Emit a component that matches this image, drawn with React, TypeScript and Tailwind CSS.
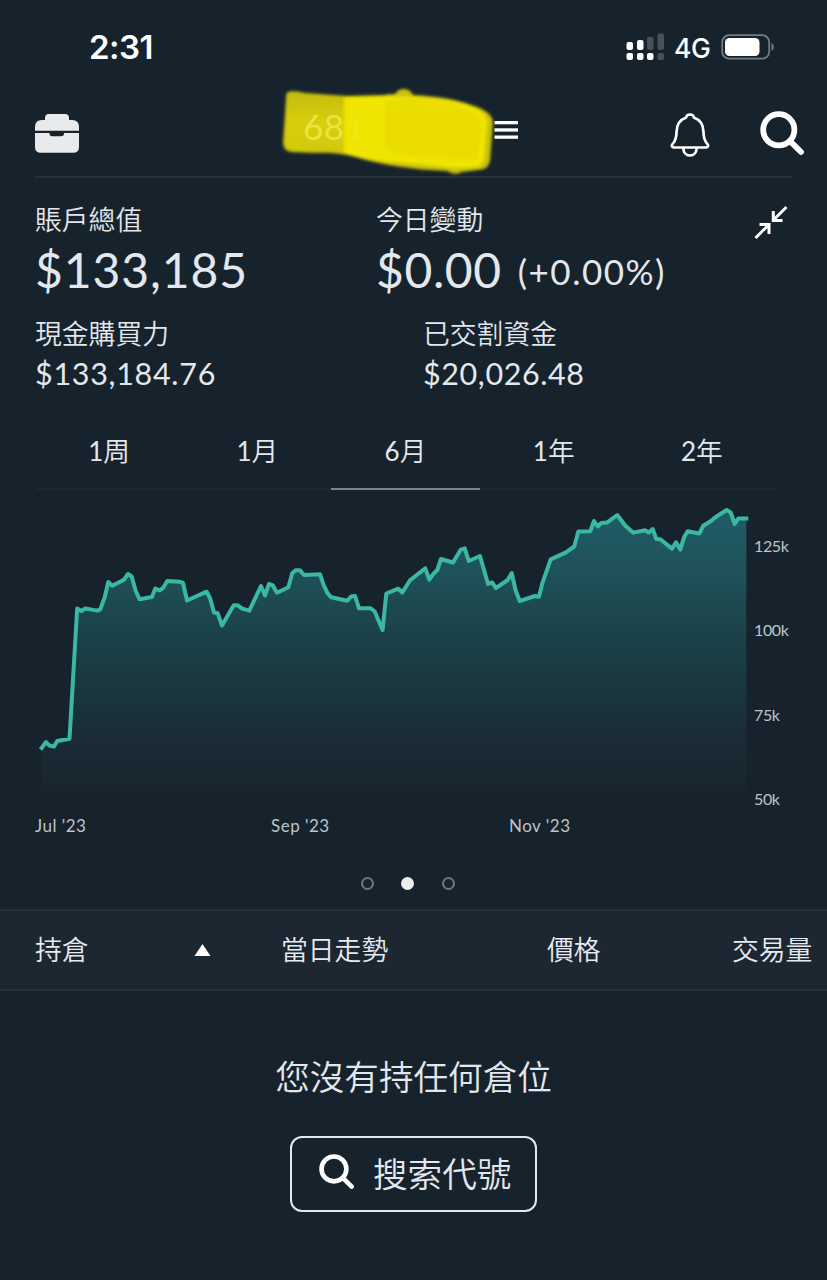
import React, { useState } from "react";

type Point = [number, number];

const tabs = [
  { count: 1, unit: "周" },
  { count: 1, unit: "月" },
  { count: 6, unit: "月" },
  { count: 1, unit: "年" },
  { count: 2, unit: "年" },
];
const priceLabels = ["125k", "100k", "75k", "50k"];

// chart points, inside a 827x320 viewBox
const points: Point[] = [
  [41.7, 258], [46, 252], [49.3, 255.5], [54, 256.5], [57.3, 251], [69.5, 248.7],
  [77.2, 118.5], [81.3, 121], [85.3, 118.5], [97.3, 120.6], [100.3, 119.3],
  [104.7, 107.3], [108.3, 92], [112.3, 95.7], [124, 89.7], [128, 84], [131.7, 86.5],
  [135.7, 101], [139.7, 109.3], [152, 107], [155.3, 98.5], [159.7, 100.3], [163, 98],
  [167.3, 91], [179.3, 91.7], [183, 93], [187, 110.5], [206.7, 101.7], [210, 108],
  [214, 122.5], [217.7, 123.3], [222, 135.5], [233.7, 115.3], [237.7, 115.3],
  [242.3, 118.7], [249.3, 120.7], [261, 96], [265, 105.5], [269, 94], [272.7, 95.3],
  [277, 102.7], [288.3, 97.3], [292.3, 83], [296, 80.2], [300, 80.3], [304, 85],
  [320, 84.2], [323.7, 95.3], [327.7, 103.3], [331.3, 107.3], [347.3, 110.8],
  [351, 106.5], [355, 105.9], [359, 118.3], [370.7, 118.3], [374.7, 121.5],
  [382.6, 140], [386.3, 103.5], [398.3, 98.7], [402.3, 102.5], [410, 90.3],
  [425.3, 78.3], [429.3, 89.7], [433.3, 84], [437.3, 80], [441, 69], [453, 72.5],
  [460.7, 59.7], [464.7, 58.4], [468.7, 71], [480, 66], [488, 94], [492, 92.4],
  [496, 98], [507.7, 90], [511.7, 83], [515.7, 100.7], [519.7, 111], [535, 106],
  [539, 106.8], [542.3, 93.3], [550.7, 69.4], [566, 62.4], [574.3, 56.3],
  [578.3, 41.4], [590.3, 41.3], [594, 31], [597.7, 36.5], [601.3, 33], [607.3, 32.4],
  [617.3, 25], [625.3, 35.7], [633, 42.6], [645, 40.3], [648.7, 42.4], [652.7, 39],
  [656.3, 49], [660.3, 49.3], [672, 58.6], [676, 52.3], [680.3, 59.6], [684, 47.3],
  [687.7, 41.2], [699.3, 43.5], [703.3, 35.7], [711, 31], [714.7, 27.7],
  [726.7, 20], [730.7, 22.5], [734.7, 34], [738.3, 28.5], [746.3, 28.5],
];

const linePath = "M" + points.map(([x, y]) => `${x} ${y}`).join("L");
const areaPath = `${linePath}L746.3 310L41.7 310Z`;

const SearchIcon = ({ className }: { className: string }) => (
  <svg className={className} viewBox="0 0 44 44" fill="none" stroke="#fff">
    <circle cx="18.8" cy="18.8" r="15.6" strokeWidth="5.8" />
    <path d="M30 30L41 41" strokeWidth="5.8" strokeLinecap="round" />
  </svg>
);

const StatusBar = () => (
  <div className="flex h-[94px] items-center justify-between pl-[89px] pr-[52px] text-white">
    <span className="font-['Inter'] text-[33px] font-semibold leading-none tracking-[-0.5px]">2:31</span>
    <div className="flex items-center">
      <svg className="h-[28px] w-[39px]" viewBox="0 0 39 28" fill="#fff">
        <rect x="0.5" y="9" width="6.5" height="8" rx="2" />
        <rect x="0.5" y="20" width="6.5" height="7" rx="2" />
        <rect x="11" y="7" width="6.5" height="10" rx="2" />
        <rect x="11" y="20" width="6.5" height="7" rx="2" />
        <rect x="21" y="4" width="6.5" height="13" rx="2" fill="#46515a" />
        <rect x="21" y="20" width="6.5" height="7" rx="2" />
        <rect x="31.5" y="0.5" width="6.5" height="16.5" rx="2" fill="#46515a" />
        <rect x="31.5" y="20" width="6.5" height="7" rx="2" fill="#46515a" />
      </svg>
      <span className="ml-[9px] w-[38px] pt-[2px] font-['Inter'] text-[26.5px] font-medium leading-none tracking-[-0.5px]">
        4G
      </span>
      <svg className="ml-[9px] h-[26px] w-[54px]" viewBox="0 0 54 26">
        <rect x="1.2" y="1.2" width="47" height="23.5" rx="7" fill="none" stroke="#717b83" strokeWidth="1.8" />
        <rect x="4" y="4" width="34.5" height="18" rx="4.5" fill="#fff" />
        <path d="M50.5 9C53.5 10.5 53.5 15.5 50.5 17Z" fill="#717b83" />
      </svg>
    </div>
  </div>
);

const Header = () => (
  <div className="relative ml-[35px] mr-[35px] flex h-[84px] border-b-2 border-[#26323d]">
    <svg className="mt-5 h-[39px] w-[44px]" viewBox="0 0 44 39" fill="#e9eaec">
      <path d="M0 16.7V13Q0 6 7 6H10V4Q10 0 14 0H30Q34 0 34 4V6H37Q44 6 44 13V16.7Z" />
      <path d="M0 19H14.5V19.5Q14.5 22.3 17.3 22.3H26.2Q29 22.3 29 19.5V19H44V33Q44 38.8 38 38.8H6Q0 38.8 0 33Z" />
    </svg>
    {/* highlighter over the account number */}
    <div className="absolute left-[240px] top-[-10px] h-[95px] w-[226px]">
      <svg className="h-full w-full" viewBox="0 0 226 95">
        <defs>
          <filter id="soft" x="-10%" y="-10%" width="120%" height="120%">
            <feGaussianBlur stdDeviation="1.4" />
          </filter>
          <linearGradient id="leftInk" x1="0" y1="0" x2="0" y2="1">
            <stop offset="0" stopColor="#c5bd11" />
            <stop offset="0.5" stopColor="#d8ce0a" />
            <stop offset="1" stopColor="#d2c90c" />
          </linearGradient>
        </defs>
        <g filter="url(#soft)">
          <path
            d="M13 8Q18 6 30 9L72 12L110 11Q112 10 120 10Q123 5 129 5Q135 5 138 11Q176 13 196 21Q217 27 218 38L215 77Q213 86 203 86L187 88Q180 92 172 87Q120 85 80 73Q60 68 40 69L16 68Q8 67 8 58L11 15Q11 9 13 8Z"
            fill="#c9c110"
          />
          <path d="M14 10Q40 10 70 14V67Q50 65 17 66Q10 65 10 58Z" fill="url(#leftInk)" />
          <path
            d="M69 13L111 12L142 13Q176 15 195 22Q212 28 212 39L209 75Q207 82 200 83L180 84Q150 80 115 78Q90 75 69 69Z"
            fill="#efe500"
          />
          <path d="M110 16L145 15Q180 17 198 29Q207 35 207 46L202 76L165 74Q135 75 110 66Z" fill="#ebdd04" />
        </g>
      </svg>
      <span className="absolute left-[28px] top-[23px] font-['Lato'] text-[35px] leading-[38px] tracking-[0.5px] text-[#ebe43c]">
        68<span className="text-[#f0e710]">1</span>
      </span>
    </div>
    <svg className="ml-[415px] mt-[27px] h-[19px] w-[24px]" viewBox="0 0 24 19" fill="#fff">
      <rect x="0.5" y="0" width="23.5" height="3.3" />
      <rect x="0.5" y="7.3" width="23.5" height="3.3" />
      <rect x="0.5" y="14.5" width="23.5" height="3.3" />
    </svg>
    <svg className="ml-[152px] mt-[18px] h-[46px] w-[40px]" viewBox="0 0 40 46" fill="none" stroke="#fff" strokeWidth="2.7">
      <path
        d="M20 2.5C17.5 2.5 16.3 4 15.8 5.8C9.5 8 6.8 13.5 6.6 19.5C6.4 26 5.5 29 2.9 31.6C1 33.7 2 35.5 4 35.5H36C38 35.5 39 33.7 37.1 31.6C34.5 29 33.6 26 33.4 19.5C33.2 13.5 30.5 8 24.2 5.8C23.7 4 22.5 2.5 20 2.5Z"
        strokeLinejoin="round"
      />
      <path d="M13.3 36C13.5 40.5 16 43.5 20 43.5S26.5 40.5 26.7 36" />
    </svg>
    <SearchIcon className="ml-[50px] mr-[-13px] mt-[17px] h-[44px] w-[44px] shrink-0" />
  </div>
);

const Summary = () => (
  <div className="pl-[35px] pr-[39px] pt-[26px] text-[#e3e7ee]">
    <div className="flex h-[100px]">
      <div className="w-[341px]">
        <div className="text-[26.8px] font-[350] leading-8">賬戶總值</div>
        <div className="text-[48px] leading-[68px] tracking-[0.9px]">$133,185</div>
      </div>
      <div className="flex-1">
        <div className="text-[26.8px] font-[350] leading-8">今日變動</div>
        <div className="flex items-baseline whitespace-nowrap leading-[68px]">
          <span className="text-[48px] tracking-[0.6px]">$0.00</span>
          <span className="relative -top-[3px] ml-[16px] text-[35px] tracking-[1.5px]">(+0.00%)</span>
        </div>
      </div>
      <svg className="mt-[1px] h-[34px] w-[34px]" viewBox="0 0 34 34" fill="none" stroke="#fff" strokeWidth="3">
        <path d="M32.5 2L19.5 15M19.3 6V15.4H28.5" />
        <path d="M1.5 33L14.5 20M5.5 19.5H15V29" />
      </svg>
    </div>
    <div className="mt-[14px] flex h-[78px]">
      <div className="w-[388px]">
        <div className="text-[26.8px] font-[350] leading-8">現金購買力</div>
        <div className="text-[30.5px] leading-[46px] tracking-[0.7px]">$133,184.76</div>
      </div>
      <div>
        <div className="text-[26.8px] font-[350] leading-8">已交割資金</div>
        <div className="text-[30.5px] leading-[46px] tracking-[0.6px]">$20,026.48</div>
      </div>
    </div>
  </div>
);

const Chart = () => (
  <div className="relative h-[358px]">
    <svg className="block h-[320px] w-full" viewBox="0 0 827 320" fill="none">
      <defs>
        <linearGradient id="area" gradientUnits="userSpaceOnUse" x1="0" y1="20" x2="0" y2="312">
          <stop offset="0" stopColor="#205d67" />
          <stop offset="0.2" stopColor="#1f525b" />
          <stop offset="0.45" stopColor="#1b4047" />
          <stop offset="0.62" stopColor="#1a363d" />
          <stop offset="0.8" stopColor="#1a2b35" />
          <stop offset="1" stopColor="#17232c" />
        </linearGradient>
      </defs>
      <path d={areaPath} fill="url(#area)" />
      <path d={linePath} stroke="#3ab8a2" strokeWidth="4" strokeLinejoin="round" strokeLinecap="square" />
    </svg>
    <div className="absolute right-0 top-[46px] flex h-[273px] w-[73px] flex-col justify-between text-[16px] leading-5 tracking-[-0.4px] text-[#bec3cb]">
      {priceLabels.map((label) => (
        <span key={label}>{label}</span>
      ))}
    </div>
    <div className="flex pl-[35px] pt-[5px] text-[17px] leading-[22px] tracking-[0.5px] text-[#bec3cb]">
      <span className="w-[236px]">Jul '23</span>
      <span className="w-[238px]">Sep '23</span>
      <span>Nov '23</span>
    </div>
  </div>
);

const Holdings = () => (
  <>
    <div className="flex h-[82px] items-center border-y-2 border-[#26313b] bg-[#1c2732] pl-[35px] text-[26.8px] font-[350] text-[#e6eaf1]">
      <span className="w-[159px]">持倉</span>
      <svg className="h-[13px] w-[17px]" viewBox="0 0 17 13" fill="#fff">
        <path d="M8.5 0L16.5 12H0.5Z" />
      </svg>
      <span className="ml-[70px] w-[266px]">當日走勢</span>
      <span className="w-[185px]">價格</span>
      <span className="whitespace-nowrap">交易量</span>
    </div>
    <div className="flex flex-col items-center pt-[64px] text-[34.6px] font-[350] text-[#e3e7ee]">
      <p className="leading-[44px]">您沒有持任何倉位</p>
      <button className="mt-[37px] flex h-[76px] w-[247px] items-center rounded-xl border-2 border-[#e3e7ee] pl-[27px] leading-none">
        <SearchIcon className="mb-[5px] h-[35px] w-[35px]" />
        <span className="ml-[19px]">搜索代號</span>
      </button>
    </div>
  </>
);

export default function App() {
  const [activeTab, setActiveTab] = useState(2);

  return (
    <div className="h-[1280px] w-[827px] overflow-hidden bg-[#17232c] font-['Lato','Noto_Sans_CJK_TC',sans-serif]">
      <StatusBar />
      <Header />
      <Summary />
      <div className="ml-[35px] mt-[20px] flex h-[74px] w-[741px] border-b-2 border-[#1c2931] text-[26.7px] font-[350] text-[#e3e7ee]">
        {tabs.map((tab, index) => (
          <button
            key={index}
            onClick={() => setActiveTab(index)}
            className={`-mb-[2px] flex-1 border-b-2 pb-[1px] ${
              index === activeTab ? "border-[#7c848c]" : "border-transparent"
            }`}
          >
            <span className="text-[26px] font-normal">{tab.count}</span>
            {tab.unit}
          </button>
        ))}
      </div>
      <Chart />
      <div className="flex h-[61px] justify-center gap-[27.5px] pr-[12px] pt-[29px]">
        <span className="h-[13px] w-[13px] rounded-full border-2 border-[#6d777f]" />
        <span className="h-[13px] w-[13px] rounded-full bg-[#eceded]" />
        <span className="h-[13px] w-[13px] rounded-full border-2 border-[#6d777f]" />
      </div>
      <Holdings />
    </div>
  );
}
